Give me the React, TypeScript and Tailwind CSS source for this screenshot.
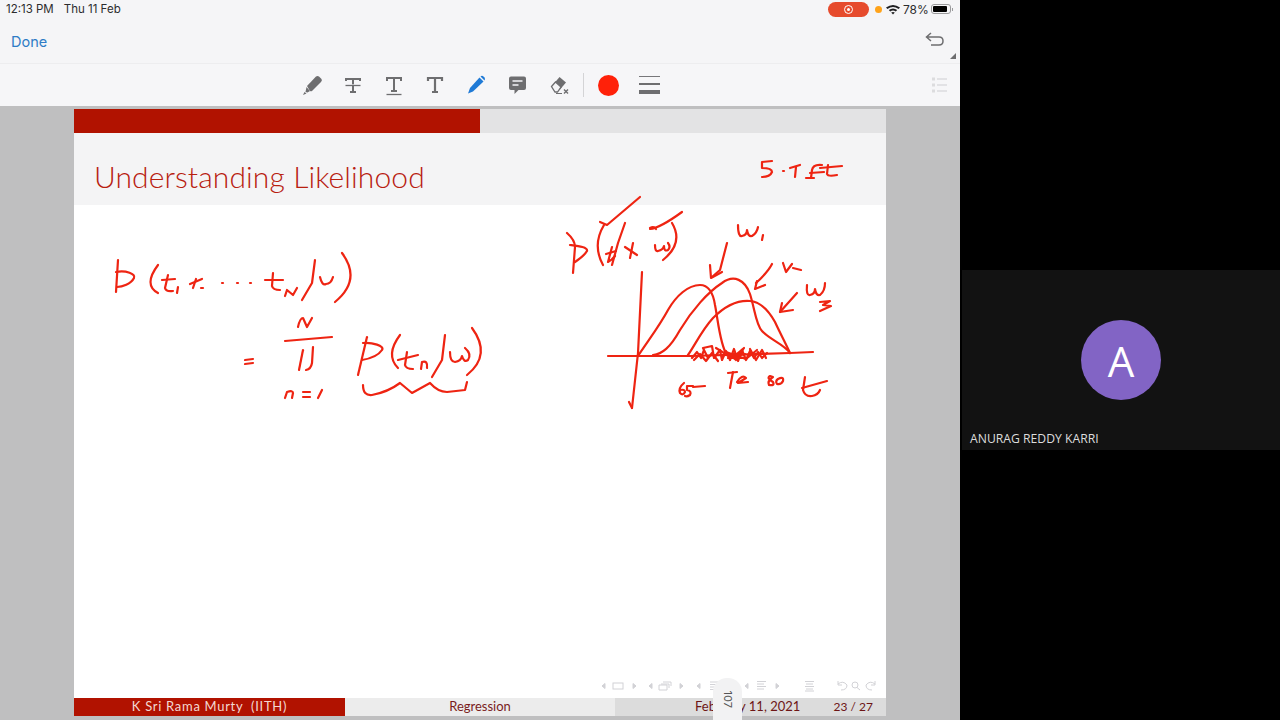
import React from "react";

const sans = "font-['Inter','Liberation_Sans',sans-serif]";
const slideFont = "font-['Lato','Liberation_Sans',sans-serif]";

function Ink() {
  const strokes = [
    // first equation
    "M118 260 L116 292", "M116 272 C126 270 136 274 134 278 C131 284 122 287 117 287",
    "M158 265 Q143 285 158 293",
    "M168 275 L165 288 Q166 292 173 291", "M162 280 L175 279", "M178 287 L177 293",
    "M196 279 L193 288", "M190 284 L202 279", "M201 288 L203 288",
    "M222 283 L223 283", "M237 283 L238 283", "M250 283 L251 283",
    "M273 273 L272 286 Q273 290 280 290", "M265 280 L283 280", "M285 296 L287 290 L293 295 L297 288",
    "M315 260 L312 283 L302 300", "M320 277 Q322 286 326 284 Q331 284 333 277",
    "M342 253 Q362 280 335 302",
    // second equation
    "M245 360 L253 359", "M245 364 L253 363",
    "M298 327 Q300 318 303 318 L307 327 L312 318",
    "M285 341 L332 337", "M303 350 L299 370", "M313 347 L312 363 Q311 369 306 370",
    "M285 398 L287 392 Q293 390 293 393 L292 398", "M303 392 L310 392", "M303 397 L310 397", "M322 390 L318 398",
    "M367 337 L358 375", "M363 343 C372 342 385 346 382 350 C378 356 368 359 362 360",
    "M400 335 Q385 355 398 368",
    "M407 352 L405 365 Q406 369 413 369", "M398 360 L418 355", "M421 369 L422 362 Q428 360 427 368",
    "M445 335 L442 360 L432 377",
    "M450 352 Q450 362 455 362 Q461 361 462 356 Q464 363 468 360 Q472 354 465 348",
    "M472 328 Q492 355 467 375",
    "M363 385 Q363 396 372 395 Q388 392 400 383 L412 393 L430 383 Q438 392 447 392 L465 390 L467 382",
    // 5.7 ft
    "M772 161 L762 162 L762 168 Q772 168 772 172 Q770 177 762 177", "M783 171 L784 171",
    "M790 168 L800 165", "M796 167 L795 177",
    "M822 165 Q813 164 812 170 L811 178", "M806 178 L814 178", "M810 173 L824 172",
    "M828 165 L827 174 Q828 177 837 175", "M820 168 L842 166",
    // second p(t|x,w)
    "M567 233 Q575 240 575 247 L573 273", "M570 245 C578 246 588 247 587 251 C584 256 578 260 575 262",
    "M604 225 Q592 245 603 265",
    "M600 222 L607 225 L640 197",
    "M612 247 L608 262 Q612 260 615 256", "M606 254 L616 251",
    "M625 223 L618 243 L612 265",
    "M625 247 L637 255", "M633 243 L630 258",
    "M655 245 Q655 252 658 251 Q663 250 664 246 Q664 252 668 250 Q671 247 668 243",
    "M650 229 Q660 228 682 212", "M650 228 Q654 226 656 229",
    "M672 223 Q684 243 663 260",
    // w1, arrow
    "M738 225 Q738 237 742 236 Q747 235 747 230 Q748 237 752 236 Q757 233 758 227", "M763 235 L762 240",
    "M727 243 L720 270 L712 277", "M710 265 L711 278 L722 272",
    // w2 and arrow
    "M783 263 L786 272 L792 264", "M793 268 L801 270",
    "M772 264 Q768 272 756 283", "M757 281 L755 289 L765 285",
    // axes
    "M642 272 L638 353 L632 408", "M629 402 L632 408",
    "M608 356 L690 356 L790 353 L813 352",
    // curves
    "M638 356 C650 338 660 325 668 310 C676 296 688 285 700 285 C708 285 713 292 715 305 C718 320 720 345 727 355",
    "M653 355 C662 354 670 348 680 330 C692 310 708 292 722 283 C734 274 745 280 750 294 C755 310 756 325 762 331 C770 340 784 344 790 353",
    "M688 355 C695 345 702 330 713 318 C725 306 738 300 750 301 C762 302 770 313 775 322 C781 335 786 344 790 353",
    // w3
    "M797 293 L780 312", "M782 303 L780 312 L793 310",
    "M807 285 Q806 296 810 295 Q815 294 815 289 Q816 296 820 295 Q825 291 825 283",
    "M820 302 L830 301 L823 305 L831 306 L820 311",
    // scribbles
    "M692 358 L697 352 L701 358 L704 350 L708 358 L703 348 L712 346 L714 358 L720 350 L722 360 L726 351 L730 360 L734 349 L738 361 L742 350 L746 360 L750 351 L754 358 L758 352 L762 358 L767 353",
    "M716 348 L732 358 L744 348 L736 360 L726 352 L746 359 L757 350",
    "M728 354 L745 354 L728 358 L746 358", "M694 360 L700 354 L706 361 L712 353 L718 361", "M750 349 L756 360 L762 350 L766 358",
    // labels
    "M684 383 Q678 388 680 393 Q683 396 685 392 Q685 389 680 390", "M693 386 L687 386 L687 390 Q692 391 690 395 Q687 397 685 396", "M693 387 L705 386",
    "M728 373 L737 372", "M733 372 L730 388", "M737 382 Q742 374 746 378 L738 383 L748 382",
    "M770 376 Q766 378 773 382 Q775 386 769 385 Q767 381 773 377 Z", "M778 379 Q784 376 783 381 Q781 385 777 384 Q775 381 778 379 Z",
    "M805 377 L803 390 Q805 397 812 396 Q818 395 820 390", "M802 388 L827 381",
  ];
  return (
    <svg className="absolute left-0 top-0 pointer-events-none" width="960" height="720" viewBox="0 0 960 720" fill="none" stroke="#ee2412" strokeWidth="2.2" strokeLinecap="round" strokeLinejoin="round">
      {strokes.map((d, i) => <path key={i} d={d} />)}
    </svg>
  );
}

function ToolIcons() {
  const c = "#6e6e70";
  return (
    <div className="flex items-center h-full pl-[301px]">
      <svg width="22" height="22" viewBox="0 0 22 22" className="mr-[19px]">
        <path d="M6 12 L15 2.500 Q16.500 1.500 18 2.500 L20.500 5 Q21.500 6.500 20 8 L11 17 Q10 17.500 9 17 Z" fill={c} />
        <path d="M5.500 13 L9 17 L6.500 18.500 L4.500 18 Z M3.500 18 L5.500 19.500 L2 21 Z" fill={c} />
      </svg>
      <svg width="22" height="22" viewBox="0 0 22 22" className="mr-[19px]" fill="none" stroke={c}>
        <path d="M4 7 V5 H18 V7 M11 5 V18 M8 18 H14" strokeWidth="2" />
        <path d="M3.500 11 H18.500" strokeWidth="1.300" stroke="#f5f5f7" />
        <path d="M3.500 11.500 H18.500" strokeWidth="1.300" />
      </svg>
      <svg width="22" height="22" viewBox="0 0 22 22" className="mr-[19px]" fill="none" stroke={c}>
        <path d="M4 7 V4 H18 V7 M11 4 V17 M8 17 H14" strokeWidth="2" />
        <path d="M3.500 20.500 H18.500" strokeWidth="1.300" />
      </svg>
      <svg width="22" height="22" viewBox="0 0 22 22" className="mr-[19px]" fill="none" stroke={c}>
        <path d="M4 7 V4 H18 V7 M11 4 V18 M8 18 H14" strokeWidth="2.200" />
      </svg>
      <svg width="22" height="22" viewBox="0 0 22 22" className="mr-[19px]">
        <path d="M5 14 L14.500 3.500 L18.500 7.500 L8 17.500 L3 19.500 Z" fill="#1f7ad6" />
        <path d="M15.500 2.500 Q17 1 18.500 2.500 L19.500 3.500 Q20.500 5 19.500 6.500 Z" fill="#1f7ad6" />
      </svg>
      <svg width="22" height="22" viewBox="0 0 22 22" className="mr-[20px]">
        <path d="M5 2.500 H18 Q20 2.500 20 4.500 V14 Q20 16 18 16 H12.500 L8.500 20 V16 H5 Q3 16 3 14 V4.500 Q3 2.500 5 2.500 Z" fill={c} />
        <path d="M6.500 7 H16.500 M6.500 11 H12.500" stroke="#f5f5f7" strokeWidth="1.500" />
      </svg>
      <svg width="22" height="22" viewBox="0 0 22 22">
        <path d="M3.500 12.500 L11.500 3 L18 8.500 L12 15.500 Z" fill={c} />
        <path d="M3.500 12.500 L7.500 8 L13 13 L9.500 18 H7 Z" fill="#f5f5f7" stroke={c} strokeWidth="1.300" />
        <path d="M8 19.500 H14" stroke={c} strokeWidth="1" />
        <path d="M16 15.500 L20 19.500 M20 15.500 L16 19.500" stroke={c} strokeWidth="1.400" />
      </svg>
      <div className="w-px h-[24px] bg-[#d4d4d6] ml-[13px] mr-[14px]" />
      <div className="w-[21px] h-[21px] rounded-full bg-[#ff2109] mr-[20px]" />
      <div className="w-[21px] flex flex-col mr-[271px]">
        <div className="h-px bg-[#77777a]" />
        <div className="h-[2px] bg-[#6e6e70] mt-[6px]" />
        <div className="h-[4px] bg-[#6e6e70] mt-[5px]" />
      </div>
      <svg width="18" height="16" viewBox="0 0 18 16" stroke="#dcdcde" fill="none" strokeWidth="1.300">
        <path d="M1 2 H4 M1 8 H4 M1 14 H4" strokeWidth="3" />
        <path d="M6 2 H16 M6 8 H16 M6 14 H16" />
      </svg>
    </div>
  );
}

function NavIcons() {
  const c = "#d2d2d6";
  return (
    <svg width="280" height="12" viewBox="0 0 280 12" fill="none" stroke={c} strokeWidth="1">
      <path d="M5 3.500 L2 6 L5 8.500 Z" fill={c} />
      <rect x="13" y="3" width="10" height="6" />
      <path d="M33 3.500 L36 6 L33 8.500 Z" fill={c} />
      <path d="M52 3.500 L49 6 L52 8.500 Z" fill={c} />
      <path d="M59 5 H67 V10 H59 Z M61 4 H69 V8 M63 2 H71 V6" />
      <path d="M80 3.500 L83 6 L80 8.500 Z" fill={c} />
      <path d="M100 3.500 L97 6 L100 8.500 Z" fill={c} />
      <path d="M110 2 H118 M110 4.500 H116 M110 7 H118 M110 9.500 H116" />
      <path d="M148 3.500 L145 6 L148 8.500 Z" fill={c} />
      <path d="M157 1.500 H166 M157 4 H164 M157 6.500 H166 M157 9 H164" />
      <path d="M176 3.500 L179 6 L176 8.500 Z" fill={c} />
      <path d="M205 1.500 H214 M206 4 H213 M205 6.500 H214 M206 9 H213 M205 11 H214" />
      <path d="M238 4 Q243 0 247 5 Q247 10 241 10 M238 1 V5 H242" />
      <circle cx="255" cy="5" r="3" /><path d="M257 7.500 L260 10" />
      <path d="M275 4 Q270 0 266 5 Q266 10 272 10 M275 1 V5 H271" />
    </svg>
  );
}

export default function App() {
  return (
    <div className={`flex w-[1280px] h-[720px] overflow-hidden bg-black ${sans}`}>
      <div className="relative w-[960px] h-full flex flex-col bg-[#bfbfc0]">
        <div className="h-[20px] bg-[#f5f5f7] flex items-center justify-between pl-[6px] pr-[7px] pb-[2px] text-[11.500px] text-[#2c2c2e]">
          <div className="flex gap-[10px] mt-[2px]"><span>12:13 PM</span><span>Thu 11 Feb</span></div>
          <div className="flex items-center">
            <div className="w-[41px] h-[15px] rounded-full bg-[#e64b2d] flex items-center justify-center mr-[6px]">
              <div className="w-[9px] h-[9px] rounded-full border-[1.500px] border-white flex items-center justify-center"><div className="w-[3px] h-[3px] rounded-full bg-white" /></div>
            </div>
            <div className="w-[7px] h-[7px] rounded-full bg-[#ffa31a] mr-[4px]" />
            <svg width="14" height="11" viewBox="0 0 14 11" className="mr-[3px]" fill="#1f1f21">
              <path d="M0 3.500 Q7 -1.500 14 3.500 L12.600 5 Q7 1 1.400 5 Z" />
              <path d="M2.800 6 Q7 3 11.200 6 L9.800 7.500 Q7 5.500 4.200 7.500 Z" />
              <path d="M5.200 8.500 Q7 7.300 8.800 8.500 L7 10.500 Z" />
            </svg>
            <span className="mr-[3px] text-[12px] w-[25px] mt-px">78%</span>
            <div className="w-[20px] h-[10px] rounded-[3px] border border-[#9a9a9c] p-px"><div className="w-[14px] h-full rounded-[1px] bg-black" /></div>
            <div className="w-px h-[3px] bg-[#9a9a9c] ml-px" />
          </div>
        </div>
        <div className="h-[44px] bg-[#f5f5f7] border-b border-[#ededef] relative flex items-center justify-between pl-[11px] pr-[15px]">
          <span className="text-[14.500px] text-[#2f7cc6] mt-[1px]">Done</span>
          <svg width="20" height="16" viewBox="0 0 20 16" fill="none" stroke="#6e6e70" strokeWidth="1.500" className="mb-[3px]">
            <path d="M6 1 L1.500 5 L6 9 M1.500 5 H14 Q18 5 18 9 Q18 13 14 13 H6" />
          </svg>
          <div className="absolute right-[4px] bottom-[4px] w-0 h-0 border-l-[6px] border-l-transparent border-b-[6px] border-b-[#6e6e70]" />
        </div>
        <div className="h-[42px] bg-[#f6f6f8]"><ToolIcons /></div>
        <div className="flex-1 min-h-0 px-[74px] pt-[3px] pb-[3px] flex flex-col">
          <div className="h-[24px] flex shrink-0">
            <div className="w-[406px] bg-[#b11200]" />
            <div className="flex-1 bg-[#e3e3e4]" />
          </div>
          <div className={`h-[72px] shrink-0 bg-[#f4f4f5] flex items-center pl-[20px] pt-[14px] ${slideFont}`}>
            <span className="text-[30px] font-light tracking-[0.1px] text-[#b8200f]">Understanding Likelihood</span>
          </div>
          <div className="flex-1 min-h-0 bg-white relative">
            <div className="absolute left-[526px] top-[475px]"><NavIcons /></div>
          </div>
          <div className={`h-[19px] shrink-0 flex text-[13px] pb-px ${slideFont}`}>
            <div className="w-[271px] bg-[#b11200] text-[#f3d8d2] flex items-center justify-center tracking-[0.7px]">K Sri Rama Murty&nbsp;&nbsp;(IITH)</div>
            <div className="w-[270px] bg-[#ececec] text-[#7a1c1c] flex items-center justify-center">Regression</div>
            <div className="flex-1 bg-[#dcdcdc] text-[#6d1515] flex items-center justify-between pl-[80px] pr-[13px]">
              <span>February 11, 2021</span><span className="text-[12px]">23 / 27</span>
            </div>
          </div>
        </div>
        <Ink />
        <div className="absolute left-[713px] bottom-0 w-[29px] h-[42px] bg-[#f2f2f3] rounded-t-[14px] flex items-center justify-center">
          <span className="rotate-90 text-[11px] text-[#555]">107</span>
        </div>
      </div>
      <div className="w-[320px] h-full pt-[270px] pl-[2px]">
        <div className="relative h-[180px] bg-[#121212] flex items-center justify-center">
          <div className="w-[80px] h-[80px] rounded-full bg-[#8264c5] flex items-center justify-center text-white text-[42px] font-['Open_Sans','Liberation_Sans',sans-serif]">A</div>
          <span className="absolute left-[8px] bottom-[2px] text-[12.200px] text-[#dddddd] font-['Open_Sans','Liberation_Sans',sans-serif]">ANURAG REDDY KARRI</span>
        </div>
      </div>
    </div>
  );
}
